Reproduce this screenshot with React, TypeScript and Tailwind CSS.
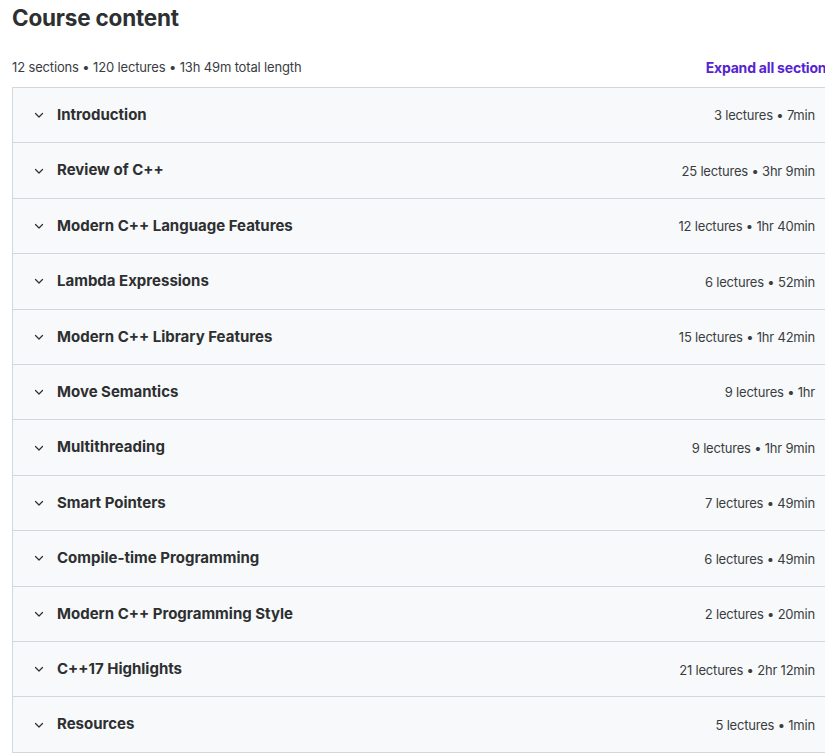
import React from "react";

type Section = {
	title: string;
	lectures: number;
	length: string;
};

const sections: Section[] = [
	{ title: "Introduction", lectures: 3, length: "7min" },
	{ title: "Review of C++", lectures: 25, length: "3hr 9min" },
	{ title: "Modern C++ Language Features", lectures: 12, length: "1hr 40min" },
	{ title: "Lambda Expressions", lectures: 6, length: "52min" },
	{ title: "Modern C++ Library Features", lectures: 15, length: "1hr 42min" },
	{ title: "Move Semantics", lectures: 9, length: "1hr" },
	{ title: "Multithreading", lectures: 9, length: "1hr 9min" },
	{ title: "Smart Pointers", lectures: 7, length: "49min" },
	{ title: "Compile-time Programming", lectures: 6, length: "49min" },
	{ title: "Modern C++ Programming Style", lectures: 2, length: "20min" },
	{ title: "C++17 Highlights", lectures: 21, length: "2hr 12min" },
	{ title: "Resources", lectures: 5, length: "1min" },
];

const Chevron = () => (
	<svg
		className="h-[12px] w-[12px] shrink-0 text-[#2d2f31]"
		fill="none"
		viewBox="0 0 12 12"
	>
		<path
			d="M2.5 4.5 6 8l3.5-3.5"
			stroke="currentColor"
			strokeLinecap="round"
			strokeLinejoin="round"
			strokeWidth="1.2"
		/>
	</svg>
);

const SectionRow = ({ section }: { section: Section }) => (
	<div className="flex h-[55.42px] items-center justify-between border-b border-[#d1d7dc] bg-[#f7f9fa] pr-[19px] pl-[20px]">
		<div className="flex items-center gap-[12px]">
			<Chevron />
			<span className="text-[15px] font-bold text-[#2d2f31]">
				{section.title}
			</span>
		</div>
		<span className="pt-[2px] text-[13px] tracking-[-0.2px] text-[#3a3d3f]">
			{section.lectures} lectures • {section.length}
		</span>
	</div>
);

export default function App() {
	return (
		<div
			className="h-[753px] w-[825px] overflow-hidden bg-white"
			style={{ fontFamily: "Inter, 'Liberation Sans', sans-serif" }}
		>
			<div className="w-[834px] pl-[12px]">
				<h2 className="pt-[3px] text-[22.5px] leading-[30px] font-bold tracking-[-0.2px] text-[#2d2f31]">
					Course content
				</h2>
				<div className="mt-[24px] flex items-center justify-between pb-[9px]">
					<span className="text-[13px] tracking-[-0.15px] text-[#3a3d3f]">
						12 sections • 120 lectures • 13h 49m total length
					</span>
					<button
						className="text-[14px] font-bold tracking-[-0.2px] whitespace-nowrap text-[#5624d0]"
						type="button"
					>
						Expand all sections
					</button>
				</div>
				<div className="border-t border-l border-[#d1d7dc]">
					{sections.map((section) => (
						<SectionRow key={section.title} section={section} />
					))}
				</div>
			</div>
		</div>
	);
}
